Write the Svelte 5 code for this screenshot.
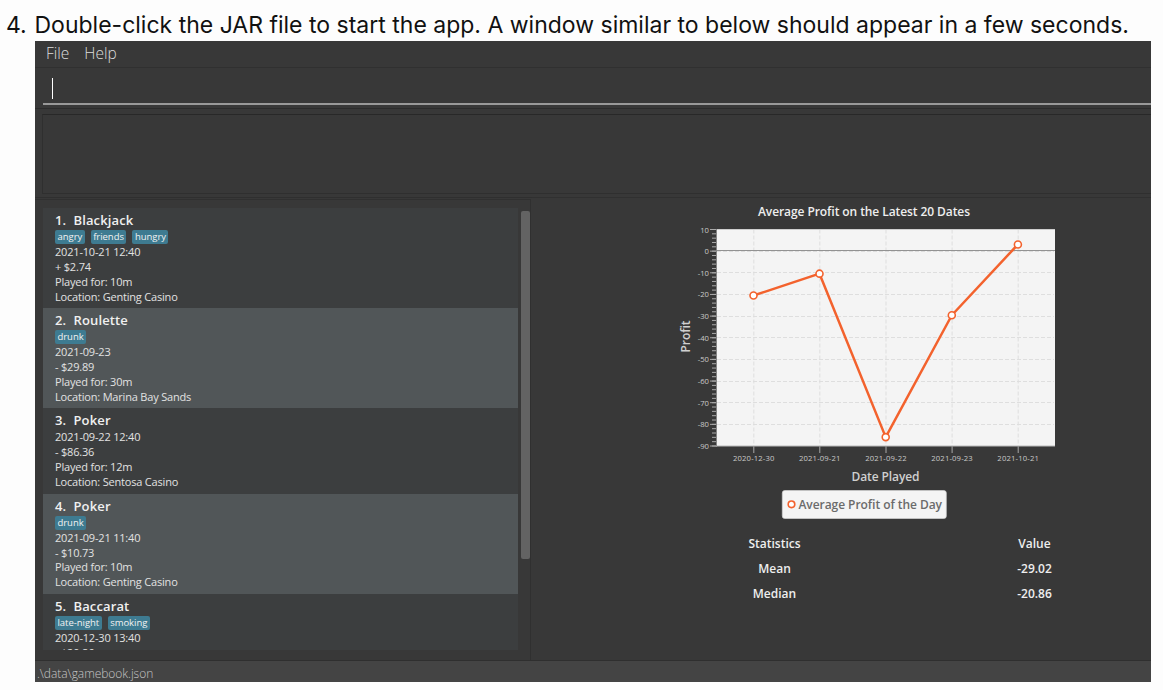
<script>
  const games = [
    { name: 'Blackjack', tags: ['angry', 'friends', 'hungry'], lines: ['2021-10-21 12:40', '+ $2.74', 'Played for: 10m', 'Location: Genting Casino'] },
    { name: 'Roulette', tags: ['drunk'], lines: ['2021-09-23', '- $29.89', 'Played for: 30m', 'Location: Marina Bay Sands'] },
    { name: 'Poker', tags: [], lines: ['2021-09-22 12:40', '- $86.36', 'Played for: 12m', 'Location: Sentosa Casino'] },
    { name: 'Poker', tags: ['drunk'], lines: ['2021-09-21 11:40', '- $10.73', 'Played for: 10m', 'Location: Genting Casino'] },
    { name: 'Baccarat', tags: ['late-night', 'smoking'], lines: ['2020-12-30 13:40', '- $20.86'] },
  ];
  const stats = [['Statistics', 'Value'], ['Mean', '-29.02'], ['Median', '-20.86']];

  // Chart geometry: plot area inside a 400 x 325 drawing
  const left = 47, right = 385, top = 31.5, bottom = 248;
  const y = (v) => top + ((10 - v) * (bottom - top)) / 100;
  const majors = Array.from({ length: 11 }, (_, i) => 10 - i * 10);
  const minors = Array.from({ length: 51 }, (_, i) => 10 - i * 2);
  const points = [
    { x: 83.5, v: -20.5, label: '2020-12-30' },
    { x: 149.5, v: -10.4, label: '2021-09-21' },
    { x: 215.7, v: -85.9, label: '2021-09-22' },
    { x: 281.8, v: -29.6, label: '2021-09-23' },
    { x: 347.9, v: 3.1, label: '2021-10-21' },
  ];
  const line = points.map((p) => `${p.x},${y(p.v)}`).join(' ');
</script>

<div class="page">
  <div class="step"><span class="num">4.</span><span class="instruction">Double-click the JAR file to start the app. A window similar to below should appear in a few seconds.</span></div>
  <div class="app">
    <nav class="menu"><span>File</span><span>Help</span></nav>
    <div class="command"><div class="field"><i class="caret"></i></div></div>
    <div class="result"><div class="box"></div></div>
    <div class="main">
      <section class="left">
        <div class="list">
          {#each games as g, i}
            <article class="card" class:alt={i % 2 === 1}>
              <h2><span class="idx">{i + 1}.</span>{g.name}</h2>
              {#if g.tags.length}
                <div class="tags">{#each g.tags as t}<span>{t}</span>{/each}</div>
              {/if}
              {#each g.lines as l}<p>{l}</p>{/each}
            </article>
          {/each}
        </div>
        <div class="track"><div class="thumb"></div></div>
      </section>
      <section class="right">
        <svg class="chart" width="400" height="325" viewBox="0 0 400 325">
          <text class="title" x="194" y="18" text-anchor="middle" textLength="212">Average Profit on the Latest 20 Dates</text>
          <rect x={left} y="31" width={right - left} height="217" fill="#f4f4f4" />
          <g stroke="#dedede" stroke-dasharray="4 2" stroke-width="1">
            {#each majors.slice(1, 10) as m}
              <line x1={left} x2={right - 1} y1={Math.floor(y(m)) + 0.5} y2={Math.floor(y(m)) + 0.5} />
            {/each}
            {#each points as p}
              <line x1={p.x + 0.3} x2={p.x + 0.3} y1={top} y2={bottom} />
            {/each}
          </g>
          <line x1={left} x2={right} y1="31.5" y2="31.5" stroke="#cfcfcf" />
          <line x1={left} x2={right} y1="52.5" y2="52.5" stroke="#929292" />
          <g stroke="#a9a9a9">
            {#each minors as m}<line x1="42" x2="47" y1={y(m)} y2={y(m)} />{/each}
            {#each majors as m}<line x1="40" x2="47" y1={y(m)} y2={y(m)} />{/each}
            {#each points as p}<line x1={p.x + 0.3} x2={p.x + 0.3} y1="248" y2="255" />{/each}
            <line x1="46.5" x2="46.5" y1="31" y2="248" stroke="#858585" />
            <line x1="46" x2={right} y1="248.2" y2="248.2" stroke="#999" />
          </g>
          {#each majors as m}<text class="tick" x="39" y={y(m) + 3} text-anchor="end">{m}</text>{/each}
          {#each points as p}<text class="tick" x={p.x + 0.2} y="263.4" text-anchor="middle" textLength="41.5">{p.label}</text>{/each}
          <polyline points={line} fill="none" stroke="#f3622d" stroke-width="2.5" stroke-linejoin="round" />
          {#each points as p}<circle cx={p.x} cy={y(p.v)} r="3.5" fill="#fff" stroke="#f3622d" stroke-width="1.6" />{/each}
          <text class="axis" x="215.5" y="282.5" text-anchor="middle" textLength="68">Date Played</text>
          <text class="axis" transform="translate(19.5 138.5) rotate(-90)" text-anchor="middle" textLength="32">Profit</text>
          <rect x="112.3" y="292.5" width="164" height="28" rx="2.5" fill="#f4f4f4" stroke="#d4d4d4" stroke-width="0.7" />
          <circle cx="121.5" cy="306.3" r="3.3" fill="#fff" stroke="#f3622d" stroke-width="1.6" />
          <text class="legend" x="128.5" y="310.8" textLength="143.5">Average Profit of the Day</text>
        </svg>
        <div class="stats">
          {#each stats as row}
            <span>{row[0]}</span><span>{row[1]}</span>
          {/each}
        </div>
      </section>
    </div>
    <footer>.\data\gamebook.json</footer>
  </div>
</div>

<style>
  :global(body) { margin: 0; background: #fdfdfd; overflow: hidden; }
  .page { width: 1163px; height: 690px; overflow: hidden; background: #fdfdfd; box-sizing: border-box; display: flex; flex-direction: column; }
  .step { height: 41px; flex: none; display: flex; padding-left: 6px; box-sizing: border-box; font: 23px/50px Inter, sans-serif; color: #111; white-space: nowrap; }
  .num { width: 28.5px; flex: none; }
  .app { width: 1116px; height: 641px; margin-left: 35px; background: #383838; display: flex; flex-direction: column; font-family: "Open Sans", sans-serif; overflow: hidden; }
  .menu { height: 27px; box-sizing: border-box; border-bottom: 1px solid #303030; flex: none; display: flex; gap: 15px; padding-left: 11px; font-size: 15.5px; line-height: 25px; font-weight: 300; color: #ddd; }
  .command { height: 41px; flex: none; box-sizing: border-box; padding: 1px 0 3px 8px; border-bottom: 1px solid #2c2c2c; }
  .field { height: 36px; box-sizing: border-box; border-bottom: 2px solid #999; padding: 9px 0 0 9px; }
  .caret { display: block; width: 1px; height: 21px; background: #fff; }
  .result { height: 89px; flex: none; box-sizing: border-box; padding: 5px 0 4px 7px; border-bottom: 1px solid #2f2f2f; }
  .box { height: 80px; box-sizing: border-box; border: 1px solid #2f2f2f; border-top-color: #282828; border-right: 0; }
  .main { height: 463px; flex: none; display: flex; box-sizing: border-box; border-bottom: 1px solid #2f2f2f; }
  .left { width: 497px; box-sizing: border-box; border-top: 1px solid #303030; margin-top: 1px; border-right: 1px solid #303030; padding: 8px 0 0 8px; display: flex; gap: 3px; }
  .list { width: 475px; height: 442px; overflow: hidden; background: #3c3e3f; }
  .card { box-sizing: border-box; padding: 4px 12px 3.6px; background: #3c3e3f; color: #e2e2e2; }
  .card.alt { background: #515658; }
  h2 { margin: 0; font-size: 13px; line-height: 17px; height: 18px; font-weight: 600; letter-spacing: .13px; color: #f0f0f0; }
  .idx { display: inline-block; width: 18.5px; }
  p { margin: 0; font-size: 11px; line-height: 14.9px; letter-spacing: -.19px; }
  .tags { display: flex; gap: 6px; height: 15px; align-items: flex-start; }
  .tags span { height: 14px; padding: 0 2.5px; border-radius: 2px; background: #3e7b91; color: #f2f2f2; font-size: 9.5px; line-height: 14px; letter-spacing: -.04px; }
  .track { width: 9px; padding-top: 3px; }
  .thumb { height: 348px; border-radius: 2px; background: #636363; }
  .right { flex: 1; border-top: 1px solid #303030; margin-top: -1px; margin-left: 1px; padding-left: 138px; }
  .chart { display: block; }
  .chart text { font-weight: 600; fill: #eee; }
  .chart .title { font-size: 12px; }
  .chart .tick { font-size: 7.7px; font-weight: 400; fill: #c9c9c9; }
  .chart .axis { font-size: 12px; fill: #d0d0d0; }
  .chart .legend { font-size: 12px; fill: #6b6b6b; }
  .stats { display: grid; grid-template-columns: 260px 260px; margin-left: -25.5px; margin-top: 7.5px; font-size: 12px; line-height: 25.2px; font-weight: 600; color: #eee; text-align: center; }
  footer { height: 21px; flex: none; background: #444; color: #c7c7c7; font-size: 12px; line-height: 25px; font-weight: 300; padding-left: 2px; letter-spacing: -.04px; }
</style>
